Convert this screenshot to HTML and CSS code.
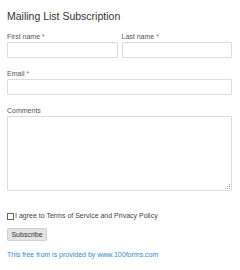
FILE: index.html
```html
<!DOCTYPE html>
<html lang="en">
<head>
  <meta charset="UTF-8" />
  <meta name="viewport" content="width=device-width, initial-scale=1" />
  <title>Mailing List Subscription</title>
  <link rel="stylesheet" href="styles.css">
</head>
<body>
  <form class="signup">
    <h1>Mailing List Subscription</h1>
    <div class="row">
      <div class="field">
        <label>First name <span class="req">*</span></label>
        <input type="text" />
      </div>
      <div class="field">
        <label>Last name <span class="req">*</span></label>
        <input type="text" />
      </div>
    </div>
    <div class="field">
      <label>Email <span class="req">*</span></label>
      <input type="email" />
    </div>
    <div class="field">
      <label>Comments</label>
      <div class="area">
        <textarea></textarea>
        <svg class="grip" width="5" height="5" viewBox="0 0 5 5"><rect x="4" y="0" width="1" height="1" fill="#aaa"/><rect x="2" y="2" width="1" height="1" fill="#aaa"/><rect x="4" y="2" width="1" height="1" fill="#aaa"/><rect x="0" y="4" width="1" height="1" fill="#aaa"/><rect x="2" y="4" width="1" height="1" fill="#aaa"/><rect x="4" y="4" width="1" height="1" fill="#aaa"/></svg>
      </div>
    </div>
    <label class="agree"><input type="checkbox" />I agree to Terms of Service and Privacy Policy</label>
    <button type="submit">Subscribe</button>
    <p class="credit">This free from is provided by www.100forms.com</p>
  </form>
</body>
</html>
```
FILE: styles.css
```css
body {
  margin: 0;
  padding: 10px 8px 0 7px;
  font-family: "Liberation Sans", Arial, sans-serif;
  background: #fff;
}
.signup {
  width: 225px;
  display: flex;
  flex-direction: column;
}
h1 {
  margin: 0 0 11px;
  font-size: 10.5px;
  line-height: 12px;
  font-weight: normal;
  color: #333;
}
.row {
  display: grid;
  grid-template-columns: 1fr 1fr;
  gap: 4px;
}
.field {
  display: flex;
  flex-direction: column;
  margin-bottom: 12px;
}
label {
  font-size: 7px;
  line-height: 8px;
  color: #555;
  margin-bottom: 1px;
}
.req {
  color: #d9534f;
}
input[type=text],
input[type=email],
textarea {
  box-sizing: border-box;
  margin: 0;
  padding: 2px 3px;
  border: 1px solid #dcdcdc;
  border-radius: 1px;
  font: 7px "Liberation Sans", Arial, sans-serif;
  height: 16px;
  width: 100%;
}
.area {
  position: relative;
  display: flex;
}
textarea {
  height: 75px;
  resize: none;
}
.grip {
  position: absolute;
  right: 2px;
  bottom: 2px;
}
.agree {
  display: flex;
  align-items: center;
  margin: 9px 0 8px;
  color: #444;
}
.agree input {
  appearance: none;
  width: 7px;
  height: 7px;
  margin: 0 1px 0 0;
  border: 1px solid #666;
  background: #fff;
}
button {
  align-self: flex-start;
  width: 40px;
  height: 13px;
  padding: 0;
  font: 7px "Liberation Sans", Arial, sans-serif;
  color: #333;
  background: #e4e4e4;
  border: 1px solid #d0d0d0;
  border-radius: 1px;
}
.credit {
  margin: 10px 0 0;
  font-size: 7px;
  line-height: 8px;
  color: #3b88c9;
}
```
